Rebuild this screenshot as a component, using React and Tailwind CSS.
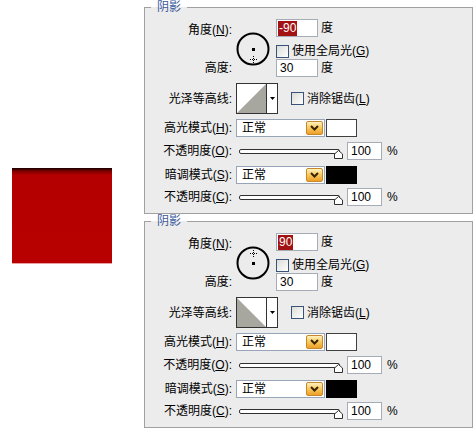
import React from 'react';

// underlined mnemonic letter inside a label
function Mn({ children }) {
  return <span className="underline underline-offset-[1px]">{children}</span>;
}

function Label({ children }) {
  return <div className="w-[87px] shrink-0 text-right">{children}</div>;
}

function NumBox({ value, selected, w = 'w-[42px]' }) {
  return (
    <div className={`h-[18px] ${w} border border-[#a5acb5] bg-white flex items-center pl-[1px]`}>
      {selected ? (
        <span className="bg-[#a31212] text-white leading-[15px] px-[1px]">{value}</span>
      ) : (
        <span className="pl-[2px] leading-[15px]">{value}</span>
      )}
    </div>
  );
}

function Check({ children }) {
  return (
    <div className="flex items-center">
      <span className="w-[13px] h-[13px] shrink-0 border border-[#3a5378] bg-[linear-gradient(135deg,#dcdcd7,#ffffff)]" />
      <span className="ml-[3px] leading-[14px]">{children}</span>
    </div>
  );
}

// light direction dial: dot in the middle, dotted cross for the light source
function AngleDial({ up }) {
  const cy = up ? 7 : 27;
  const dots = [-3, -1, 1, 3];
  return (
    <svg width="34" height="34" viewBox="0 0 34 34" shapeRendering="crispEdges">
      <circle cx="17" cy="17" r="15.5" fill="none" stroke="#000" strokeWidth="2" shapeRendering="geometricPrecision" />
      <rect x="15.5" y="15.5" width="3" height="3" fill="#000" />
      {dots.map((d) => (
        <rect key={'v' + d} x="16.5" y={cy + d - 0.5} width="1" height="1" fill="#000" />
      ))}
      {dots.map((d) => (
        <rect key={'h' + d} x={16.5 + d} y={cy - 0.5} width="1" height="1" fill="#000" />
      ))}
    </svg>
  );
}

function Contour({ flip }) {
  return (
    <div className="flex h-[31px] w-[42px] border border-[#333]">
      <div className="w-[30px] h-full bg-white border-r border-[#333]">
        <svg width="29" height="29" viewBox="0 0 29 29">
          <polygon points={flip ? '0,0 0,29 29,29' : '0,29 29,0 29,29'} fill="#a7a79f" />
        </svg>
      </div>
      <div className="flex-1 bg-white flex items-center justify-center">
        <svg width="5" height="3" viewBox="0 0 5 3">
          <polygon points="0,0 5,0 2.5,3" fill="#000" />
        </svg>
      </div>
    </div>
  );
}

function ModeSelect() {
  return (
    <div className="h-[18px] w-[89px] border border-[#98a4b8] bg-white flex items-center justify-between pl-[5px] pr-[1px]">
      <span className="leading-[14px]">正常</span>
      <span className="w-[17px] h-[14px] rounded-[2px] border border-[#c8882a] bg-[linear-gradient(to_bottom,#fff2c0,#f7c85c_50%,#ee9f28)] flex items-center justify-center">
        <svg width="9" height="6" viewBox="0 0 9 6">
          <polyline points="1,1 4.5,4.5 8,1" fill="none" stroke="#3a2400" strokeWidth="2" />
        </svg>
      </span>
    </div>
  );
}

function Slider() {
  return (
    <div className="relative w-[108px] h-[18px] flex items-center pl-[3px]">
      <div className="w-[101px] h-[5px] mt-[1px] rounded-[2px] border border-[#303030] bg-white" />
      <svg className="absolute left-[98px] top-[8px]" width="10" height="10" viewBox="0 0 10 10">
        <polygon points="4.5,0.5 8.5,4 8.5,8.5 0.5,8.5 0.5,4" fill="#fff" stroke="#303030" />
      </svg>
    </div>
  );
}

function ModeRow({ label, swatch, mt }) {
  return (
    <div className={`flex items-center ${mt}`}>
      <Label>{label}</Label>
      <div className="ml-[4px]">
        <ModeSelect />
      </div>
      <div className={`ml-[1px] h-[18px] w-[31px] border ${swatch}`} />
    </div>
  );
}

function OpacityRow({ label, mt }) {
  return (
    <div className={`flex items-center ${mt}`}>
      <Label>{label}</Label>
      <div className="ml-[4px]">
        <Slider />
      </div>
      <div className="ml-[3px]">
        <NumBox value="100" w="w-[35px]" />
      </div>
      <span className="ml-[5px]">%</span>
    </div>
  );
}

function ShadowGroup({ angle, up, flip }) {
  return (
    <fieldset className="w-[329px] border border-[#a0a0a0] bg-[#ececec] pb-[7px]">
      <legend className="ml-[6px] px-[6px] text-[#3b5a9c] leading-[14px]">阴影</legend>

      {/* angle + altitude */}
      <div className="flex mt-[5px] h-[58px]">
        <div className="w-[87px] flex flex-col justify-between text-right">
          <div className="leading-[18px] pt-[2px]">
            角度(<Mn>N</Mn>):
          </div>
          <div className="leading-[18px]">高度:</div>
        </div>
        <div className="ml-[4px] mt-[13px]">
          <AngleDial up={up} />
        </div>
        <div className="ml-[6px] flex flex-col">
          <div className="flex items-center h-[18px]">
            <NumBox value={angle} selected />
            <span className="ml-[3px]">度</span>
          </div>
          <div className="h-[22px] pt-[7px]">
            <Check>
              使用全局光(<Mn>G</Mn>)
            </Check>
          </div>
          <div className="flex items-center h-[18px]">
            <NumBox value="30" />
            <span className="ml-[3px]">度</span>
          </div>
        </div>
      </div>

      {/* gloss contour */}
      <div className="flex items-center mt-[6px]">
        <Label>光泽等高线:</Label>
        <div className="ml-[4px]">
          <Contour flip={flip} />
        </div>
        <div className="ml-[13px]">
          <Check>
            消除锯齿(<Mn>L</Mn>)
          </Check>
        </div>
      </div>

      <ModeRow
        mt="mt-[5px]"
        swatch="bg-white border-[#404040]"
        label={<>高光模式(<Mn>H</Mn>):</>}
      />
      <OpacityRow mt="mt-[5px]" label={<>不透明度(<Mn>O</Mn>):</>} />
      <ModeRow
        mt="mt-[6px]"
        swatch="bg-black border-black"
        label={<>暗调模式(<Mn>S</Mn>):</>}
      />
      <OpacityRow mt="mt-[4px]" label={<>不透明度(<Mn>C</Mn>):</>} />
    </fieldset>
  );
}

export default function App() {
  return (
    <div className="flex min-h-[431px] bg-white text-black text-[12px] font-['Liberation_Sans','Noto_Sans_CJK_SC',sans-serif]">
      {/* sample swatch */}
      <div className="w-[144px] shrink-0 flex items-center pl-[12px]">
        <div className="w-[100px] h-[96px] border-b border-[#e8a0a0] bg-[linear-gradient(to_bottom,#120000_0px,#7a0000_3px,#b40000_7px,#b80000_100%)]" />
      </div>

      <div className="flex flex-col">
        <ShadowGroup angle="-90" />
        <ShadowGroup angle="90" up flip />
      </div>
    </div>
  );
}
